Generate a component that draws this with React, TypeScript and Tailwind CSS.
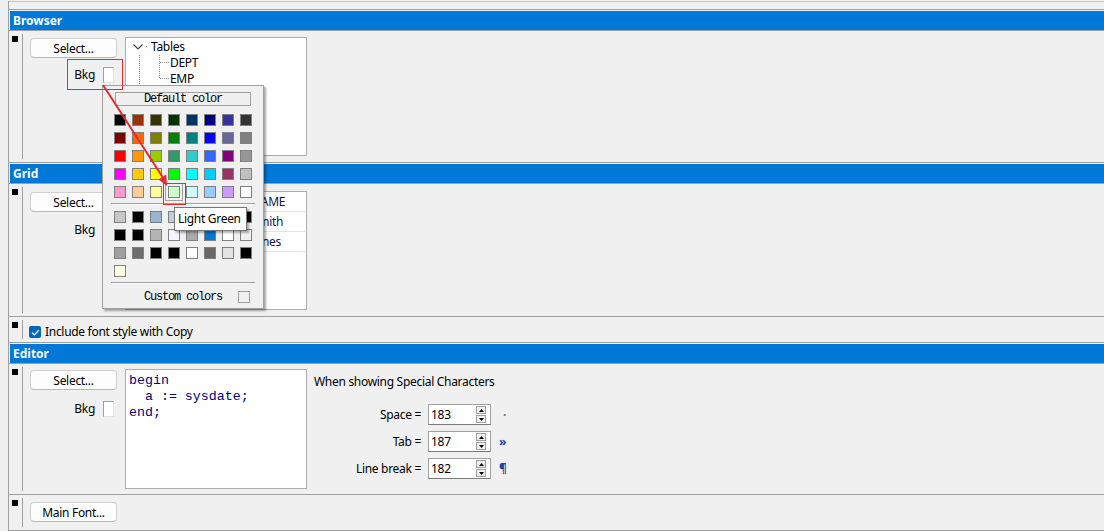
import React from "react";

const SWATCHES = [
  ["#000000", "#993300", "#333300", "#003300", "#003366", "#000080", "#333399", "#333333"],
  ["#800000", "#ff6600", "#808000", "#008000", "#008080", "#0000ff", "#666699", "#808080"],
  ["#ff0000", "#ff9900", "#99cc00", "#339966", "#33cccc", "#3366ff", "#800080", "#969696"],
  ["#ff00ff", "#ffcc00", "#ffff00", "#00ff00", "#00ffff", "#00ccff", "#993366", "#c0c0c0"],
  ["#ff99cc", "#ffcc99", "#ffff99", "#ccffcc", "#ccffff", "#99ccff", "#cc99ff", "#ffffff"],
];

// windows system colours, in the order the picker lists them
const SYSTEM = [
  "#c8c8c8", "#000000", "#99b4d1", "#bfcddb", "#f0f0f0", "#ffffff", "#646464", "#000000",
  "#000000", "#000000", "#b4b4b4", "#f4f7fc", "#ababab", "#0078d7", "#ffffff", "#f0f0f0",
  "#a0a0a0", "#6d6d6d", "#000000", "#000000", "#ffffff", "#696969", "#e3e3e3", "#000000",
  "#ffffe1",
];

const SELECTED = "#ccffcc";

export default function App() {
  return (
    <div className="relative h-[531px] w-[1104px] overflow-hidden bg-[#f0f0f0] font-['Noto_Sans',sans-serif] text-[12px] leading-[16px] tracking-[-0.3px] text-black">
      <div className="ml-[8px] h-full border-l border-[#a0a0a0]">
        <div className="mt-px h-px bg-[#c8c8c8]" />
        <div className="h-[7px]" />

        <Block title="Browser">
          <Row className="h-[131px]">
            <div className="flex pl-[7px] pt-[6px]">
              <div className="w-[87px] pt-px">
                <Button label="Select..." />
                <BkgRow className="mt-[8px]" />
              </div>
              <Tree />
            </div>
          </Row>
        </Block>

        <Block title="Grid">
          <Row className="h-[132px]">
            <div className="flex pl-[7px] pt-[7px]">
              <div className="w-[87px] pt-px">
                <Button label="Select..." />
                <BkgRow className="mt-[9px]" />
              </div>
              <GridBox />
            </div>
          </Row>
        </Block>

        <div className="border-t border-[#a0a0a0]">
          <Row className="h-[25px]">
            <div className="flex items-center gap-[4px] pl-[6px] pt-[7px]">
              <span className="flex h-[12px] w-[12px] items-center justify-center rounded-[2px] bg-[#0067c0]">
                <svg width="9" height="7" viewBox="0 0 9 7">
                  <path d="M1 3.6 L3.4 6 L8 1" fill="none" stroke="white" strokeWidth="1.2" />
                </svg>
              </span>
              <span>Include font style with Copy</span>
            </div>
          </Row>
        </div>

        <Block title="Editor">
          <Row className="h-[130px]">
            <div className="flex pl-[7px] pt-[5px]">
              <div className="w-[87px] pt-px">
                <Button label="Select..." />
                <BkgRow className="mt-[10px]" />
              </div>
              <div className="ml-[8px] h-[120px] w-[182px] border border-[#adadad] bg-white pl-[3px] pt-[3px] font-['Liberation_Mono',monospace] text-[13.3px] leading-[16px] tracking-normal whitespace-pre text-[#000080]">
                {"begin\n  a := sysdate;\nend;"}
              </div>
              <div className="ml-[7px] pt-[5px]">
                <div>When showing Special Characters</div>
                <div className="mt-[14px] flex flex-col gap-[6px]">
                  <SpinRow label="Space =" value="183" glyph="·" />
                  <SpinRow label="Tab =" value="187" glyph="»" />
                  <SpinRow label="Line break =" value="182" glyph="¶" />
                </div>
              </div>
            </div>
          </Row>
        </Block>

        <div className="border-y border-[#a0a0a0]">
          <Row className="h-[35px]">
            <div className="pl-[7px] pt-[7px]">
              <Button label="Main Font..." />
            </div>
          </Row>
        </div>
      </div>

      <ColorPopup />

      <div className="absolute left-[174px] top-[207px] flex h-[24px] w-[73px] items-center border border-[#767676] bg-white pl-[3px] shadow-[2px_2px_2px_rgba(0,0,0,0.3)]">
        Light Green
      </div>

      {/* red annotations */}
      <div className="absolute left-[67px] top-[59px] h-[31px] w-[56px] border border-[#e52b2b]" />
      <div className="absolute left-[163px] top-[183px] h-[22px] w-[23px] border border-[#e52b2b]" />
      <svg className="pointer-events-none absolute left-0 top-0" width="1104" height="531">
        <line x1="103" y1="85" x2="162.5" y2="177" stroke="#e52b2b" strokeWidth="2" />
        <polygon points="167,186 158.6,179.4 166.2,174.6" fill="#e52b2b" />
      </svg>
    </div>
  );
}

function Block({ title, children }: { title: string; children: React.ReactNode }) {
  return (
    <div className="border-t border-[#a0a0a0]">
      <div className="ml-px mt-px h-[19px] bg-[#0078d7] pl-[3px] text-[12px] font-bold leading-[19px] tracking-normal text-white">
        {title}
      </div>
      <div className="h-px bg-[#a0a0a0]" />
      {children}
    </div>
  );
}

function Row({ className, children }: { className: string; children: React.ReactNode }) {
  return (
    <div className={`flex ${className}`}>
      <div className="w-[13px] shrink-0 pl-[3px] pt-[5px]">
        <div className="h-[6px] w-[6px] bg-black" />
      </div>
      <div className="my-[3px] w-px shrink-0 bg-[#a0a0a0]" />
      <div className="flex-1">{children}</div>
    </div>
  );
}

function Button({ label }: { label: string }) {
  return (
    <div className="flex h-[20px] w-[87px] items-center justify-center rounded-[4px] border border-[#d0d0d0] border-b-[#b8b8b8] bg-[#fdfdfd] pt-px">
      {label}
    </div>
  );
}

function BkgRow({ className }: { className: string }) {
  return (
    <div className={`flex items-center justify-end gap-[8px] pr-[3px] ${className}`}>
      <span className="pt-px">Bkg</span>
      <span className="h-[16px] w-[11px] border border-[#a0a0a0] border-b-[#e3e3e3] border-r-[#e3e3e3] bg-white" />
    </div>
  );
}

function Tree() {
  return (
    <div className="relative ml-[8px] h-[119px] w-[182px] border border-[#adadad] bg-white pt-px">
      <svg className="absolute left-0 top-0" width="180" height="117">
        <g stroke="#8a8a8a" strokeDasharray="1 1" fill="none">
          <line x1="13.5" y1="17" x2="13.5" y2="117" />
          <line x1="33.5" y1="17" x2="33.5" y2="41" />
          <line x1="34" y1="24.5" x2="43" y2="24.5" />
          <line x1="34" y1="40.5" x2="43" y2="40.5" />
          <line x1="20" y1="8.5" x2="22" y2="8.5" />
        </g>
      </svg>
      <div className="flex h-[16px] items-center pl-[7px]">
        <svg width="10" height="6" viewBox="0 0 10 6">
          <path d="M0.5 0.5 L5 5 L9.5 0.5" fill="none" stroke="#404040" strokeWidth="1.1" />
        </svg>
        <span className="ml-[8px]">Tables</span>
      </div>
      <div className="flex h-[16px] items-center pl-[44px]">DEPT</div>
      <div className="flex h-[16px] items-center pl-[44px]">EMP</div>
    </div>
  );
}

function GridBox() {
  const rows = [
    ["ID", "NAME"],
    ["1", "Smith"],
    ["2", "Jones"],
  ];
  return (
    <div className="ml-[8px] h-[119px] w-[182px] border border-[#adadad] bg-white">
      {rows.map((r) => (
        <div key={r[1]} className="mr-px flex h-[20px] items-center border-b border-[#e3e3e3] text-[#14143c]">
          <span className="w-[126px] pl-[4px]">{r[0]}</span>
          <span>{r[1]}</span>
        </div>
      ))}
    </div>
  );
}

function SpinRow({ label, value, glyph }: { label: string; value: string; glyph: string }) {
  return (
    <div className="flex items-center">
      <span className="w-[107px] text-right">{label}</span>
      <div className="ml-[7px] flex h-[21px] w-[63px] items-center border border-[#a0a0a0] border-b-[#7a7a7a] bg-white pl-[2px]">
        <span className="flex-1">{value}</span>
        <div className="mr-[4px] flex flex-col gap-px">
          <SpinButton up />
          <SpinButton />
        </div>
      </div>
      <span
        className={`ml-[8px] font-bold text-[#2040a8] ${
          glyph === "·" ? "pl-[4px] text-[#6070a0]" : ""
        }`}
      >
        {glyph}
      </span>
    </div>
  );
}

function SpinButton({ up }: { up?: boolean }) {
  return (
    <span className="flex h-[8px] w-[10px] items-center justify-center border border-[#a0a0a0] bg-[#f0f0f0]">
      <svg width="5" height="3" viewBox="0 0 5 3">
        <polygon points={up ? "0,3 5,3 2.5,0" : "0,0 5,0 2.5,3"} fill="#000" />
      </svg>
    </span>
  );
}

function Swatch({ color }: { color: string }) {
  const selected = color === SELECTED;
  return (
    <span
      className={`block h-[12px] w-[12px] border border-[#808080] ${
        selected ? "outline outline-1 outline-offset-[2px] outline-[#a0a0a0]" : ""
      }`}
      style={{ background: color }}
    />
  );
}

function ColorPopup() {
  return (
    <div className="absolute left-[102px] top-[85px] flex h-[224px] w-[162px] flex-col items-center border border-[#a0a0a0] bg-[#f0f0f0] pt-[6px] shadow-[2px_2px_2px_rgba(0,0,0,0.35)]">
      <div className="flex h-[14px] w-[136px] items-center justify-center border border-[#a0a0a0] font-['Liberation_Mono',monospace] text-[12px] tracking-[-1.2px]">
        Default color
      </div>
      <div className="mt-[8px] grid w-[138px] grid-cols-8 gap-[6px]">
        {SWATCHES.flat().map((c, i) => (
          <Swatch key={i} color={c} />
        ))}
      </div>
      <div className="mt-[5px] h-[2px] w-[144px] border-t border-b border-t-[#a0a0a0] border-b-white" />
      <div className="mt-[6px] grid w-[138px] grid-cols-8 gap-[6px]">
        {SYSTEM.map((c, i) => (
          <span key={i} className="block h-[12px] w-[12px] border border-[#808080]" style={{ background: c }} />
        ))}
      </div>
      <div className="mt-[5px] h-[2px] w-[144px] border-t border-b border-t-[#a0a0a0] border-b-white" />
      <div className="mt-[6px] flex h-[14px] w-full items-center justify-end gap-[16px] pr-[13px]">
        <span className="font-['Liberation_Mono',monospace] text-[12px] tracking-[-1.2px]">Custom colors</span>
        <span className="h-[12px] w-[12px] border border-[#a0a0a0]" />
      </div>
    </div>
  );
}
